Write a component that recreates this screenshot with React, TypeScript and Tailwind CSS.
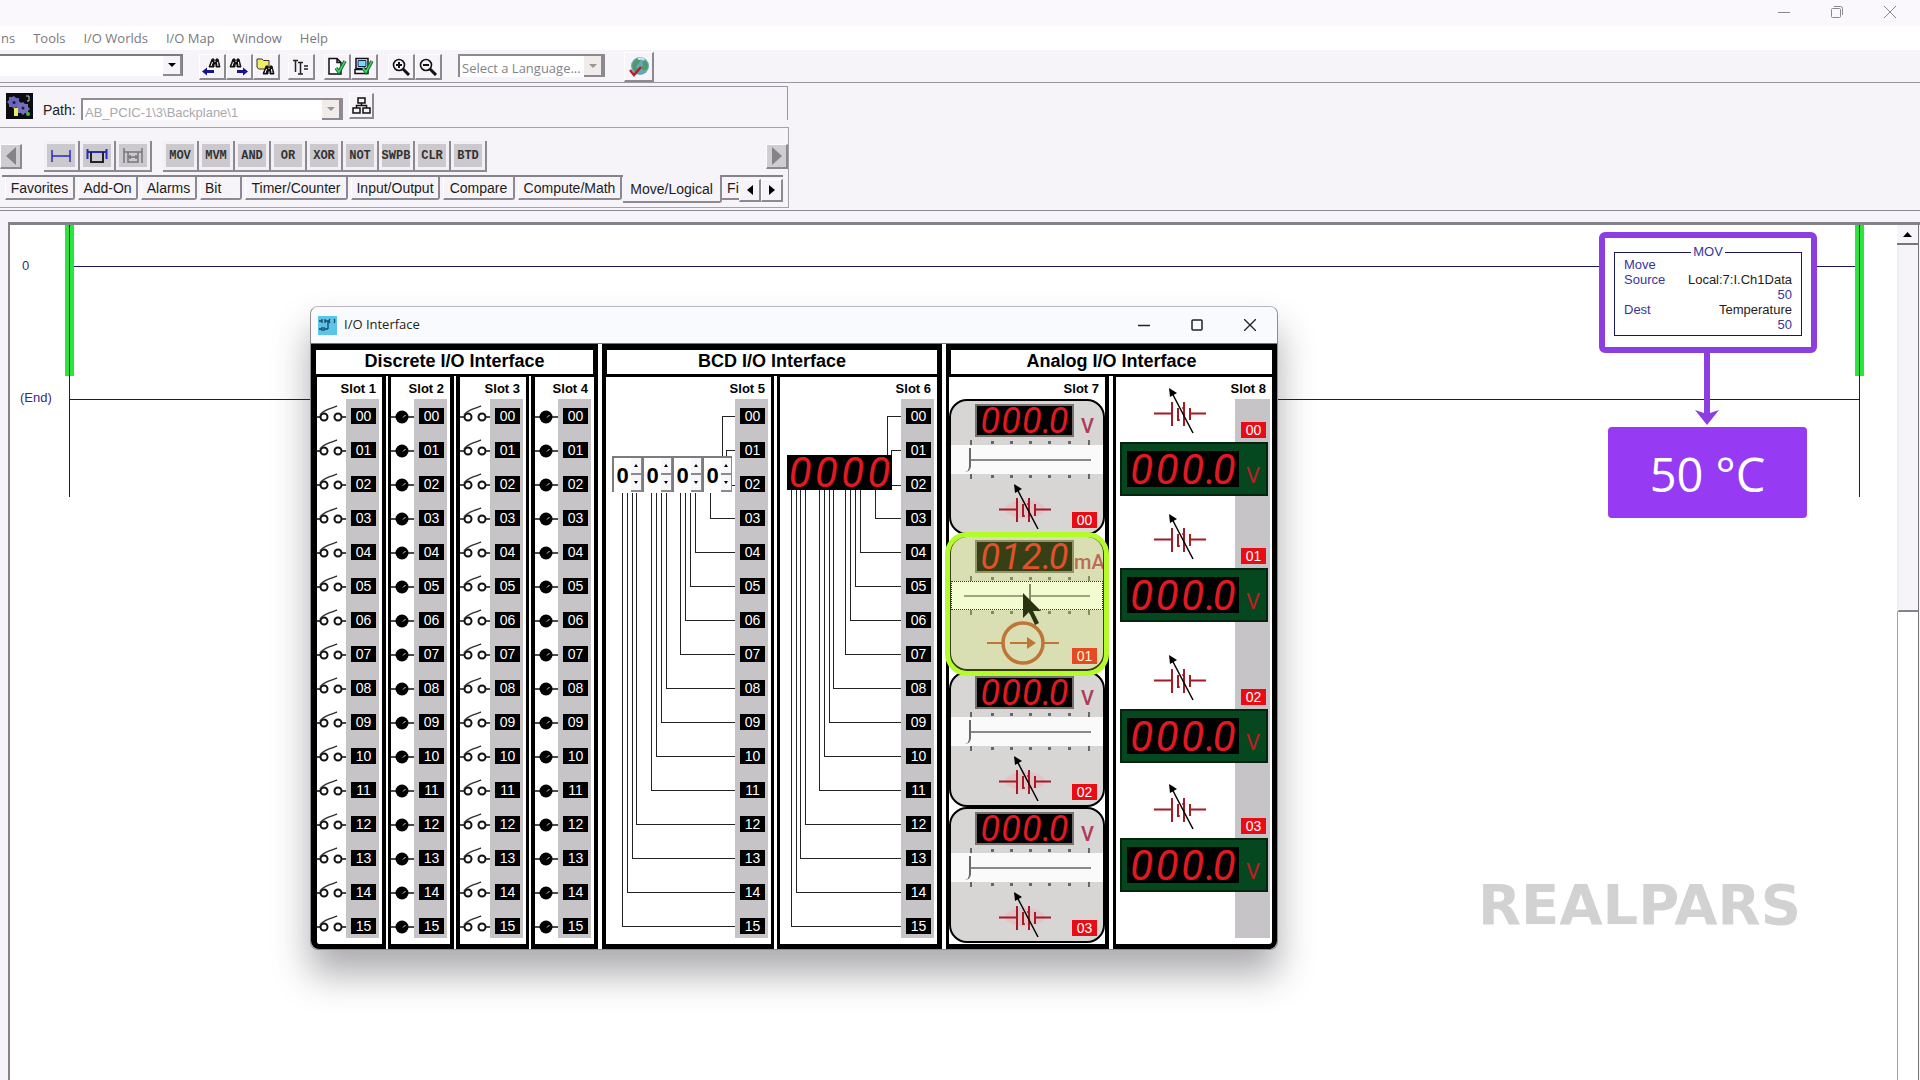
import type { ReactNode } from "react";
import clsx from "clsx";

const menuItems = ["ns", "Tools", "I/O Worlds", "I/O Map", "Window", "Help"];

const instructions = ["MOV", "MVM", "AND", "OR", "XOR", "NOT", "SWPB", "CLR", "BTD"];

const tabs = [
  { name: "Favorites", width: "w-[70px]" },
  { name: "Add-On", width: "w-[60px]" },
  { name: "Alarms", width: "w-[56px]" },
  { name: "Bit", width: "w-[42px]" },
  { name: "Timer/Counter", width: "w-[103px]" },
  { name: "Input/Output", width: "w-[89px]" },
  { name: "Compare", width: "w-[72px]" },
  { name: "Compute/Math", width: "w-[104px]" },
];

const points = Array.from({ length: 16 }, (_, i) => String(i).padStart(2, "0"));

// x of the vertical wire for points 03 to 15
const slot5Wires = [104, 89, 84, 79, 74, 60, 55, 50, 45, 30, 26, 21, 16];
const slot6Wires = [95, 80, 75, 70, 65, 53, 49, 44, 39, 25, 20, 16, 11];

function ToolButton({ label, className, children }: { label: string; className?: string; children: ReactNode }) {
  return (
    <button
      aria-label={label}
      className={clsx(
        "flex shrink-0 items-center justify-center border-t border-l border-r-2 border-b-2 border-t-white border-l-white border-r-[#8c8a90] border-b-[#8c8a90] bg-[#f6f4f8]",
        className ?? "h-[26px] w-[27px]"
      )}
    >
      {children}
    </button>
  );
}

function Binoculars() {
  return (
    <g fill="#111" stroke="#111" strokeWidth="1">
      <path d="M4 2h2v2h2V2h2l2 8H8V7H6v3H1z" />
      <path d="M4.500 5l-1.500 4M9.500 5l.5 4M6.500 4.500h1" stroke="#fff" />
    </g>
  );
}

function FindIcon({ dir }: { dir: "left" | "right" }) {
  return (
    <svg width="20" height="19" viewBox="0 0 20 19">
      <g transform={dir === "left" ? "translate(6 0)" : "translate(0 0)"}>
        <Binoculars />
      </g>
      {dir === "left" ? (
        <path d="M0 14.500l5-4v2.500h7v3H5v2.500z" fill="#151590" />
      ) : (
        <path d="M19 14.500l-5-4v2.500H8v3h6v2.500z" fill="#151590" />
      )}
    </svg>
  );
}

function FindFolderIcon() {
  return (
    <svg width="20" height="19" viewBox="0 0 20 19">
      <path d="M1 2h5l1.500 1.500H13V12H2.500L1 10z" fill="#eeee62" stroke="#333" />
      <g transform="translate(6 7)">
        <Binoculars />
      </g>
    </svg>
  );
}

function VerifyIcon({ kind }: { kind: "page" | "screen" }) {
  return (
    <svg width="20" height="19" viewBox="0 0 20 19" fill="none">
      {kind === "page" ? (
        <path d="M2 1.500h8l4 4V17H2zM10 1.500v4h4" fill="#fff" stroke="#111" strokeWidth="1.500" />
      ) : (
        <>
          <path d="M2 1.500h12v10H2zM1 12.500h13v4H1z" fill="#fff" stroke="#111" strokeWidth="1.500" />
          <path d="M4 3.500h8v6H4z" fill="#6fe0e4" stroke="#226" />
        </>
      )}
      <path d="M9 11l3 4 6-11" stroke="#0c6b2a" strokeWidth="3.500" />
      <path d="M9 11l3 4 6-11" stroke="#49d56c" strokeWidth="1.500" />
    </svg>
  );
}

function ZoomIcon({ plus }: { plus?: boolean }) {
  return (
    <svg width="19" height="18" viewBox="0 0 19 18" fill="none" stroke="#111">
      <circle cx="7" cy="7" r="5.500" strokeWidth="1.600" />
      <path d="M4 7h6" strokeWidth="2" />
      {plus && <path d="M7 4v6" strokeWidth="2" />}
      <path d="M11 11l6 6" strokeWidth="3" />
    </svg>
  );
}

function GlobeIcon() {
  return (
    <svg width="22" height="22" viewBox="0 0 22 22" fill="none">
      <circle cx="12" cy="10" r="9" fill="#6ba6b8" />
      <path d="M7 4c3-3 6 0 5 2s-5 4-3 6 1 5-2 4c-3-3-4-8 0-12zM15 5c3-1 5 2 5 5s-3 5-5 4-1-3 0-5-2-3 0-4z" fill="#4f9a6c" />
      <path d="M10 3c3-1 5 0 6 1" stroke="#d5eaf1" strokeWidth="2" />
      <path d="M2 14l4 5 7-8" stroke="#b3202c" strokeWidth="2.500" />
    </svg>
  );
}

function DropArrow({ muted }: { muted?: boolean }) {
  return (
    <span
      className={clsx(
        "pointer-events-none absolute top-0 right-0 bottom-0 flex w-[19px] items-center justify-center border-r-2 border-b-2 border-[#8c8a90]",
        muted ? "bg-[#f1ece9]" : "bg-[#f6f4f8]"
      )}
    >
      <svg width="8" height="4" viewBox="0 0 8 4">
        <path d="M0 0h8L4 4z" fill={muted ? "#9a9696" : "#000"} />
      </svg>
    </span>
  );
}

function Toolbar() {
  return (
    <div className="flex h-[33px] items-start border-b border-[#99979d] bg-[#f6f4f8] pt-[4px]">
      <div className="relative h-[22px] w-[183px] border-t-2 border-r border-[#7d7b80] bg-white">
        <select aria-label="Search" className="h-full w-full appearance-none outline-none" />
        <DropArrow />
      </div>
      <div className="ml-4 flex">
        <ToolButton label="Find previous"><FindIcon dir="left" /></ToolButton>
        <ToolButton label="Find next"><FindIcon dir="right" /></ToolButton>
        <ToolButton label="Find all"><FindFolderIcon /></ToolButton>
      </div>
      <div className="ml-2 flex">
        <ToolButton label="Rung properties">
          <svg width="16" height="16" viewBox="0 0 16 16" fill="none" stroke="#222" strokeWidth="1.500">
            <path d="M0 1.500h5M2.500 2v11M5 3.500h5M7.500 4v11M5 15h5M11 7h4M11 10h4" />
          </svg>
        </ToolButton>
      </div>
      <div className="ml-[9px] flex">
        <ToolButton label="Verify routine"><VerifyIcon kind="page" /></ToolButton>
        <ToolButton label="Verify controller"><VerifyIcon kind="screen" /></ToolButton>
      </div>
      <div className="ml-[10px] flex">
        <ToolButton label="Zoom in"><ZoomIcon plus /></ToolButton>
        <ToolButton label="Zoom out"><ZoomIcon /></ToolButton>
      </div>
      <div className="relative ml-4 h-[23px] w-[147px] border-2 border-b-0 border-[#8c8a90] bg-white">
        <select
          aria-label="Language"
          defaultValue="none"
          className="h-full w-full appearance-none pb-[4px] pl-[2px] font-['Open_Sans','Liberation_Sans',sans-serif] text-[13px] leading-[17px] text-[#858388] outline-none"
        >
          <option value="none">Select a Language...</option>
        </select>
        <DropArrow muted />
      </div>
      <ToolButton label="Check language" className="ml-[19px] -mt-[2px] h-[30px] w-[30px]"><GlobeIcon /></ToolButton>
    </div>
  );
}

function PathBar() {
  return (
    <div className="mt-[3px] flex h-[34px] max-w-[788px] items-start border-t border-r border-[#99979d] pt-[6px] pl-[6px]">
      <svg width="27" height="26" viewBox="0 0 27 26" className="shrink-0">
        <rect width="27" height="26" fill="#0b0b12" />
        <path d="M8 3l2 2 3 0 0 3 2 2-2 2 0 2-3 0-2 2-2-2-3 0 0-3-2-2 2-2 0-3 3 0z" fill="#6a66b8" />
        <path d="M17 9l2 2 3 0 0 3 2 2-2 2 0 2-3 0-2 2-2-2-3 0 0-3-2-2 2-2 0-3 3 0z" fill="#7470bc" />
        <circle cx="8" cy="9.500" r="1.500" fill="#1b1850" />
        <circle cx="17" cy="15" r="1.500" fill="#1b1850" />
        <path d="M8 15h4v8H8z" fill="#e8ee58" />
        <path d="M20 3h3v5h-2" fill="none" stroke="#ccc" />
        <circle cx="22" cy="21" r="2" fill="#42b853" />
      </svg>
      <label htmlFor="path" className="ml-[10px] w-[38px] pt-[8px] text-[14px] leading-[18px] text-[#222]">Path:</label>
      <div className="relative mt-[5px] h-[22px] w-[262px] border-2 border-b-0 border-[#8f8d92] bg-white">
        <select id="path" disabled className="h-full w-full appearance-none pb-[4px] pl-[2px] text-[13px] leading-[17px] text-[#aaa8ad] opacity-100">
          <option>AB_PCIC-1\3\Backplane\1</option>
        </select>
        <DropArrow muted />
      </div>
      <ToolButton label="Who active" className="ml-[6px] h-[26px] w-[25px]">
        <svg width="19" height="17" viewBox="0 0 19 17" fill="none" stroke="#111" strokeWidth="1.500">
          <path d="M6 1h7v5H6zM1 11h7v5H1zM11 11h7v5h-7zM9.500 6v3M4.500 11V8.500h10V11" />
        </svg>
      </ToolButton>
    </div>
  );
}

function ScrollButton({ dir }: { dir: "left" | "right" }) {
  return (
    <button
      aria-label={`Scroll ${dir}`}
      className="flex h-[25px] w-[22px] items-center justify-center border-t border-l border-r-2 border-b-2 border-t-white border-l-white border-r-[#8c8a90] border-b-[#8c8a90] bg-[#cfcdd1]"
    >
      <svg width="10" height="18" viewBox="0 0 10 18">
        <path d={dir === "left" ? "M10 0v18L0 9z" : "M0 0v18l10-9z"} fill="#858388" />
      </svg>
    </button>
  );
}

const chip =
  "flex h-[31px] w-[36px] items-center justify-center border-r-2 border-b-2 border-[#8c8a90] bg-[#cbc9cd] shadow-[inset_0_0_0_3px_#f2f0f4]";

function InstructionBar() {
  return (
    <div className="mt-[7px] h-[81px] max-w-[789px] border-t border-r border-b border-[#a3a1a6] pt-[13px]">
      <div className="flex items-center">
        <ScrollButton dir="left" />
        <div className="ml-[22px] flex">
          <button aria-label="Rung" className={chip}>
            <svg width="20" height="12" viewBox="0 0 20 12" fill="none" stroke="#2a2ac0" strokeWidth="1.500">
              <path d="M1 0v12M19 0v12M1 6h18" />
            </svg>
          </button>
          <button aria-label="Branch" className={chip}>
            <svg width="22" height="16" viewBox="0 0 22 16" fill="none" stroke="#2a2ac0" strokeWidth="1.500">
              <path d="M1.500 1v10M20.500 1v10M1 4h20" strokeWidth="2" />
              <path d="M5 4v10h12V4" stroke="#222" strokeWidth="2" />
            </svg>
          </button>
          <button aria-label="Branch level" className={chip}>
            <svg width="20" height="16" viewBox="0 0 20 16" fill="none" stroke="#77757a" strokeWidth="1.500">
              <path d="M1 0v15M19 0v15M1 4h18M5 4v10h10V4M5 9h10M7 7v4M13 7v4" />
            </svg>
          </button>
        </div>
        <div className="ml-[11px] flex font-['Liberation_Mono',monospace] text-[12px] font-bold text-[#333]">
          {instructions.map((name) => (
            <button key={name} className={chip}>{name}</button>
          ))}
        </div>
        <div className="ml-auto"><ScrollButton dir="right" /></div>
      </div>
      <div className="mt-[3px] mr-[5px] ml-[2px] flex border-t-2 border-[#85838a] pl-[3px] text-[14px] leading-[22px] text-[#1c1c1e]">
        <div className="flex gap-[3px]">
          {tabs.map((tab) => (
            <button
              key={tab.name}
              className={clsx(
                tab.width,
                tab.name === "Bit" ? "pl-[4px] text-left" : "text-center",
                "h-[23px] rounded-br-[3px] border-r-2 border-b-2 border-l border-[#8c8a90] border-l-white whitespace-nowrap"
              )}
            >
              {tab.name}
            </button>
          ))}
        </div>
        <button className="-mt-[2px] ml-[1px] h-[28px] w-[100px] rounded-br-[3px] border-r-2 border-b-2 border-[#8c8a90] bg-[#f6f4f8] pt-[2px]">
          Move/Logical
        </button>
        <button className="h-[23px] w-[17px] border-b-2 border-[#8c8a90] pl-[5px] text-left">Fi</button>
        <div className="mt-[2px] flex">
          {["M7 0v10L1 5z", "M1 0v10l6-5z"].map((d, i) => (
            <ToolButton key={d} label={i ? "Next tabs" : "Previous tabs"} className="h-[23px] w-[22px]">
              <svg width="8" height="10" viewBox="0 0 8 10"><path d={d} /></svg>
            </ToolButton>
          ))}
        </div>
      </div>
    </div>
  );
}

function Badge({ text, red }: { text: string; red?: boolean }) {
  return (
    <span
      className={clsx(
        "flex h-4 w-[25px] shrink-0 items-center justify-center text-[14px] leading-4 text-white",
        red ? "bg-[#ea0c14]" : "bg-black"
      )}
    >
      {text}
    </span>
  );
}

function SwitchSymbol() {
  return (
    <svg width="30" height="34" viewBox="0 0 30 34" fill="none" stroke="#111" strokeWidth="2" className="shrink-0">
      <path d="M0 18h4M26 18h4" strokeWidth="1.500" />
      <circle cx="8" cy="18" r="3.500" />
      <circle cx="22" cy="18" r="3.500" />
      <path d="M4 16c3-4 6-5 17-9" stroke="#333" strokeWidth="1.500" />
    </svg>
  );
}

function LampSymbol() {
  return (
    <svg width="24" height="34" viewBox="0 0 24 34" className="shrink-0">
      <path d="M0 18h24" stroke="#111" strokeWidth="1.500" />
      <circle cx="12" cy="18" r="6.500" fill="#000" />
      <path d="M13 18.500l2.500-2.500" stroke="#ddd" />
    </svg>
  );
}

function Strip({ symbol }: { symbol?: ReactNode }) {
  return (
    <div className="relative mr-[3px] ml-auto flex w-[33px] flex-col">
      <div className="absolute top-0 h-[539px] w-full bg-[#c6c4c6]" />
      {points.map((p) => (
        <div key={p} className="relative flex h-[34px] items-center justify-end pr-[3px]">
          {symbol && <span className="mr-[5px]">{symbol}</span>}
          <Badge text={p} />
        </div>
      ))}
    </div>
  );
}

function Slot({ title, className, children }: { title: string; className: string; children: ReactNode }) {
  return (
    <div className={clsx("relative flex h-[573px] flex-col border-t border-b-[5px] border-black bg-white", className)}>
      <h3 className="relative h-[22px] shrink-0 pt-[3px] pr-[6px] text-right text-[13px] leading-[18px] font-bold">{title}</h3>
      {children}
    </div>
  );
}

function Group({ title, gap, className, children }: { title: string; gap: string; className: string; children: ReactNode }) {
  return (
    <section className={className}>
      <h2 className="h-[32px] border-x-[5px] border-t-[6px] border-b-2 border-black bg-white text-center text-[18px] leading-[23px] font-bold">
        {title}
      </h2>
      <div className={clsx("flex", gap)}>{children}</div>
    </section>
  );
}

function Wires({ xs, first, width, top, bottom }: { xs: number[]; first: number[]; width: number; top: number; bottom: number }) {
  return (
    <svg width={width} height="545" className="shrink-0" fill="none" stroke="#222" strokeWidth="1" shapeRendering="crispEdges">
      <path d={`M${width} 17H${first[0]}V${top}M${width} 51H${first[1]}V${top}M${width} 86H${first[2]}`} />
      {xs.map((x, i) => (
        <path key={x} d={`M${x} ${bottom}V${17 + 34 * (i + 3)}H${width}`} />
      ))}
    </svg>
  );
}

function Spinners() {
  return (
    <div className="absolute top-[57px] left-[6px] flex">
      {[3, 2, 1, 0].map((digit) => (
        <div key={digit} className="flex h-[36px] w-[30px] border-t-2 border-l-2 border-[#7d7b80] bg-white">
          <input
            aria-label={`BCD digit ${digit}`}
            defaultValue="0"
            className="w-[17px] bg-white text-center text-[22px] font-bold outline-none"
          />
          <div className="flex flex-1 flex-col">
            {["M0 3h4L2 0z", "M0 0h4L2 3z"].map((d, i) => (
              <button
                key={d}
                aria-label={i ? "Decrease" : "Increase"}
                className="flex flex-1 items-center justify-center border-r border-b-2 border-[#8c8a90] bg-[#f7f6f9]"
              >
                <svg width="4" height="3" viewBox="0 0 4 3"><path d={d} /></svg>
              </button>
            ))}
          </div>
        </div>
      ))}
    </div>
  );
}

// Digits sit in equal cells, the point in a narrow one
function Led({ value, size, className }: { value: string; size: string; className: string }) {
  return (
    <div className={clsx("flex items-center bg-black font-[Roboto,'Liberation_Sans',sans-serif] text-[#e01a20] italic", size, className)}>
      {value.split("").map((c, i) => (
        <span key={i} className={c === "." ? "w-[6px] text-center" : "flex-1 text-center"}>{c}</span>
      ))}
    </div>
  );
}

function BatterySymbol({ glow }: { glow?: boolean }) {
  return (
    <svg width="52" height="46" viewBox="0 0 52 46" fill="none" className="shrink-0">
      {glow && <ellipse cx="26" cy="25" rx="20" ry="9" fill="#f4a0a4" opacity="0.300" />}
      <g stroke="#a41a26" strokeWidth="2">
        <path d="M0 25.500h18M36 25.500h16" />
        <path d="M18 14v24M30 14v24M24 20v13M36 20v12" />
        <path d="M24 32l2 0M28 20l2 0" strokeWidth="1.500" />
      </g>
      <path d="M17 3l22 42" stroke="#000" strokeWidth="1.500" />
      <path d="M15 0l1 9 7-4z" fill="#000" />
    </svg>
  );
}

function CurrentSymbol() {
  return (
    <svg width="72" height="46" viewBox="0 0 72 46" fill="none" stroke="#b4472c" strokeWidth="2" className="shrink-0">
      <circle cx="36" cy="23" r="20" strokeWidth="3.500" />
      <path d="M0 23h15M57 23h15M23 23h20" strokeWidth="2" />
      <path d="M40 17v12l9-6z" fill="#b4472c" stroke="none" />
    </svg>
  );
}

function Ticks() {
  return (
    <svg width="152" height="5" viewBox="0 0 152 5" className="block">
      {[20, 41, 60, 79, 98, 118, 138].map((x, i) => (
        <rect key={x} x={x - 1} y={i % 6 ? 1 : 0} width={i % 6 ? 3 : 2} height={i % 6 ? 3 : 5} fill="#666" />
      ))}
    </svg>
  );
}

function AnalogInput({ channel, value, unit, position, active }: { channel: string; value: string; unit: string; position: number; active?: boolean }) {
  return (
    <div className={clsx("relative h-[136px] shrink-0", active && "z-10")}>
      <div className="h-full overflow-hidden rounded-[18px] border-2 border-black bg-[#d8d5d5]">
        <div className="flex h-[39px] items-start pt-[3px] pl-[24px]">
          <Led value={value} size="text-[36px] leading-[30px]" className="h-[33px] w-[99px] shrink-0 border-2 border-[#77716f] px-[3px]" />
          <span className={clsx("pt-[10px] text-[20px] leading-[24px] font-[Roboto,sans-serif] font-medium text-[#b03a58]", active ? "w-[30px]" : "w-[28px] pl-[7px]")}>{unit}</span>
        </div>
        <Ticks />
        <input
          type="range"
          aria-label={`Analog input ${channel}`}
          min={0}
          max={100}
          defaultValue={position}
          className={clsx(
            "block h-[29px] w-full appearance-none bg-[#fbfafb] pr-[12px] pl-[12px] outline-none",
            "[&::-webkit-slider-runnable-track]:h-[2px] [&::-webkit-slider-runnable-track]:bg-[#8a8888]",
            "[&::-webkit-slider-thumb]:-mt-[11px] [&::-webkit-slider-thumb]:h-[24px] [&::-webkit-slider-thumb]:w-[8px] [&::-webkit-slider-thumb]:appearance-none [&::-webkit-slider-thumb]:rounded-br-[6px] [&::-webkit-slider-thumb]:border-r-2 [&::-webkit-slider-thumb]:border-[#6a6868] [&::-webkit-slider-thumb]:bg-[#fbfafb]",
            active && "border border-dotted border-black"
          )}
        />
        <Ticks />
        <div className="flex items-start pt-[5px] pr-[6px]">
          <div className={active ? "ml-[36px]" : "ml-[48px]"}>{active ? <CurrentSymbol /> : <BatterySymbol glow />}</div>
          <div className="mt-[28px] ml-auto"><Badge text={channel} red /></div>
        </div>
      </div>
      {active && (
        <>
          <div className="pointer-events-none absolute -inset-x-[4px] -top-[3px] -bottom-[5px] rounded-[22px] border-[5px] border-[#b4fb2c] bg-[#daff50]/25" />
          <svg width="20" height="34" viewBox="0 0 20 34" className="pointer-events-none absolute top-[58px] left-[73px]">
            <path d="M1 0v25l6-6 6 13 4-2-6-12h8z" fill="#2a3310" />
          </svg>
        </>
      )}
    </div>
  );
}

function AnalogOutput({ channel, className }: { channel: string; className?: string }) {
  return (
    <div className={clsx("relative", className)}>
      <div className="flex h-[54px] items-start pr-[6px] pl-[38px]">
        <BatterySymbol />
        <div className="mt-[34px] ml-auto"><Badge text={channel} red /></div>
      </div>
      <div className="ml-[4px] flex h-[54px] w-[148px] items-center border-2 border-[#06230f] bg-[#05481f] pl-[5px]">
        <Led value="000.0" size="text-[42px] leading-[36px]" className="h-[36px] w-[112px] px-[2px] pt-[2px]" />
        <span className="pt-[14px] pl-[7px] text-[22px] leading-[24px] font-[Roboto,sans-serif] text-[#c01c24]">V</span>
      </div>
    </div>
  );
}

function IoWindow() {
  return (
    <div className="absolute top-[81px] left-[300px] w-[968px] overflow-visible rounded-lg border border-[#8e8c92] border-t-[#b9b7bd] bg-white font-['Liberation_Sans',Arial,sans-serif] text-black shadow-[0_24px_36px_rgba(50,45,55,0.4)]">
      <div className="flex h-[37px] items-center rounded-t-lg border-b border-[#77757a] bg-[#f9fafe] pr-[21px] pl-[7px]">
        <svg width="19" height="19" viewBox="0 0 19 19" fill="none">
          <rect width="19" height="19" fill="#5cc4e8" />
          <path d="M1 5h3M4 3v4M7 3v4M7 5h4M12 3c-1 1-1 3 0 4M16 3c1 1 1 3 0 4M10 5v8M1 13h3M4 11v4M6 11v4M6 13h4" stroke="#174a66" strokeWidth="1.300" />
        </svg>
        <h1 className="ml-[7px] font-['Open_Sans',sans-serif] text-[13px] text-[#222]">I/O Interface</h1>
        <div className="ml-auto flex items-center gap-[41px]">
          <button aria-label="Minimize">
            <svg width="12" height="12" viewBox="0 0 12 12" stroke="#222"><path d="M0 6.500h12" strokeWidth="1.500" /></svg>
          </button>
          <button aria-label="Maximize">
            <svg width="12" height="12" viewBox="0 0 12 12" fill="none" stroke="#222" strokeWidth="1.500"><rect x="1" y="1" width="10" height="10" rx="1" /></svg>
          </button>
          <button aria-label="Close">
            <svg width="12" height="12" viewBox="0 0 12 12" stroke="#222" strokeWidth="1.300"><path d="M0 0l12 12M12 0L0 12" /></svg>
          </button>
        </div>
      </div>
      <div className="flex gap-1">
        <Group title="Discrete I/O Interface" gap="gap-[2px]" className="w-[287px]">
          <Slot title="Slot 1" className="w-[75px] rounded-bl-lg border-r-4 border-l-[6px]"><Strip symbol={<SwitchSymbol />} /></Slot>
          <Slot title="Slot 2" className="w-[66px] border-r-4 border-l-[3px]"><Strip symbol={<LampSymbol />} /></Slot>
          <Slot title="Slot 3" className="w-[73px] border-r-[3px] border-l-4"><Strip symbol={<SwitchSymbol />} /></Slot>
          <Slot title="Slot 4" className="w-[67px] border-x-4"><Strip symbol={<LampSymbol />} /></Slot>
        </Group>
        <Group title="BCD I/O Interface" gap="gap-[3px]" className="w-[340px]">
          <Slot title="Slot 5" className="w-[172px] border-r-[3px] border-l-4">
            <div className="relative flex">
              <Wires xs={slot5Wires} first={[116, 120, 125]} width={129} top={57} bottom={94} />
              <Spinners />
              <Strip />
            </div>
          </Slot>
          <Slot title="Slot 6" className="w-[165px] border-r-[5px] border-l-[3px]">
            <div className="relative flex">
              <Wires xs={slot6Wires} first={[107, 111, 112]} width={121} top={56} bottom={91} />
              <Led value="0000" size="text-[42px] leading-[35px]" className="absolute top-[56px] left-[7px] h-[35px] w-[105px]" />
              <Strip />
            </div>
          </Slot>
        </Group>
        <Group title="Analog I/O Interface" gap="gap-[4px]" className="w-[331px]">
          <Slot title="Slot 7" className="w-[163px] border-r-4 border-l-[3px]">
            <AnalogInput channel="00" value="000.0" unit="V" position={0} />
            <AnalogInput channel="01" value="012.0" unit="mA" position={50} active />
            <AnalogInput channel="02" value="000.0" unit="V" position={0} />
            <AnalogInput channel="03" value="000.0" unit="V" position={0} />
          </Slot>
          <Slot title="Slot 8" className="w-[164px] rounded-br-lg border-r-[5px] border-l-[3px]">
            <div className="absolute top-[22px] right-[2px] h-[539px] w-[35px] bg-[#c6c4c6]" />
            <AnalogOutput channel="00" className="-mt-[11px]" />
            <AnalogOutput channel="01" className="mt-[18px]" />
            <AnalogOutput channel="02" className="mt-[33px]" />
            <AnalogOutput channel="03" className="mt-[21px]" />
          </Slot>
        </Group>
      </div>
    </div>
  );
}

function MoveInstruction() {
  return (
    <div className="absolute top-[7px] right-[80px] h-[121px] w-[218px] rounded-md border-[6px] border-[#8c3ee0] bg-white px-[9px] pt-[6px]">
      <fieldset className="h-[92px] border border-[#1b1660] px-[9px] text-[13px] leading-[15px] text-[#3b33a0]">
        <legend className="mx-auto px-[2px] leading-[16px]">MOV</legend>
        <div className="-mt-[3px]">Move</div>
        <div className="flex justify-between"><span>Source</span><span className="text-[#1d1d22]">Local:7:I.Ch1Data</span></div>
        <div className="text-right">50</div>
        <div className="flex justify-between"><span>Dest</span><span className="text-[#1d1d22]">Temperature</span></div>
        <div className="text-right">50</div>
      </fieldset>
    </div>
  );
}

function Ladder() {
  return (
    <main className="relative flex-1 overflow-hidden bg-white text-[13px] text-[#332c86]">
      <div className="absolute top-0 left-[55px] h-[151px] w-[9px] bg-[#2ae63c]" />
      <div className="absolute top-0 left-[59px] h-[272px] w-px bg-[#1b1660]" />
      <div className="absolute top-0 right-[33px] h-[151px] w-[9px] bg-[#2ae63c]" />
      <div className="absolute top-0 right-[37px] h-[272px] w-px bg-[#1b1660]" />
      <div className="absolute top-[41px] right-[42px] left-[64px] h-px bg-[#1b1660]" />
      <div className="absolute top-[174px] right-[37px] left-[59px] h-px bg-[#1b1660]" />
      <span className="absolute top-[33px] left-[12px] leading-4">0</span>
      <span className="absolute top-[165px] left-[10px] leading-4">(End)</span>
      <MoveInstruction />
      <svg width="26" height="75" viewBox="0 0 26 75" className="absolute top-[126px] right-[177px]">
        <path d="M10 0h6v62l9-3-12 15L1 59l9 3z" fill="#8c3ee0" />
      </svg>
      <div className="absolute top-[202px] right-[90px] flex h-[91px] w-[199px] items-center justify-center rounded-[4px] bg-[#973af3] pt-[4px] font-['Open_Sans',sans-serif] text-[47px] text-white">
        50 °C
      </div>
      <div className="absolute top-[648px] right-[96px] font-['DejaVu_Sans',sans-serif] text-[56px] leading-[64px] font-bold text-[#d2d2d2]">
        REALPARS
      </div>
      <IoWindow />
    </main>
  );
}

export default function App() {
  return (
    <div className="flex h-screen flex-col overflow-hidden bg-[#f6f4f8] font-['Liberation_Sans',Arial,sans-serif]">
      <header className="shrink-0">
        <div className="flex h-[26px] items-center justify-end gap-[41px] bg-[#faf8fc] pr-[24px] pb-[2px]">
          <button aria-label="Minimize application">
            <svg width="12" height="12" viewBox="0 0 12 12" stroke="#8a888c"><path d="M0 6.500h12" /></svg>
          </button>
          <button aria-label="Restore application">
            <svg width="12" height="12" viewBox="0 0 12 12" fill="none" stroke="#8a888c">
              <rect x="0.500" y="2.500" width="9" height="9" rx="1" />
              <path d="M3 .5h6.500a2 2 0 012 2V9" />
            </svg>
          </button>
          <button aria-label="Close application">
            <svg width="12" height="12" viewBox="0 0 12 12" stroke="#8a888c"><path d="M0 0l12 12M12 0L0 12" /></svg>
          </button>
        </div>
        <nav className="flex h-[24px] items-center gap-[18px] bg-white pt-[2px] pl-px font-['Open_Sans',sans-serif] text-[13px] text-[#7a787e]">
          {menuItems.map((item) => (
            <button key={item}>{item}</button>
          ))}
        </nav>
        <Toolbar />
        <PathBar />
        <InstructionBar />
      </header>
      <div className="mt-[2px] shrink-0 border-t border-[#8c8a90]" />
      <div className="mt-[11px] ml-[8px] flex min-h-0 flex-1 border-t-[3px] border-l-2 border-[#85838a]">
        <Ladder />
        <aside className="mr-[1px] flex w-[22px] shrink-0 flex-col border-r border-[#77757a] bg-white">
          <button aria-label="Scroll up" className="flex h-[20px] items-center justify-center border-b-2 border-[#77757a] bg-[#f6f4f8]">
            <svg width="9" height="5" viewBox="0 0 9 5"><path d="M0 5h9L4.500 0z" /></svg>
          </button>
          <div className="h-[367px] border-b-2 border-l-2 border-b-[#85838a] border-l-[#f0eef2] bg-[#f6f4f8]" />
          <div className="flex-1 border-l border-[#a3a1a6]" />
        </aside>
      </div>
    </div>
  );
}
